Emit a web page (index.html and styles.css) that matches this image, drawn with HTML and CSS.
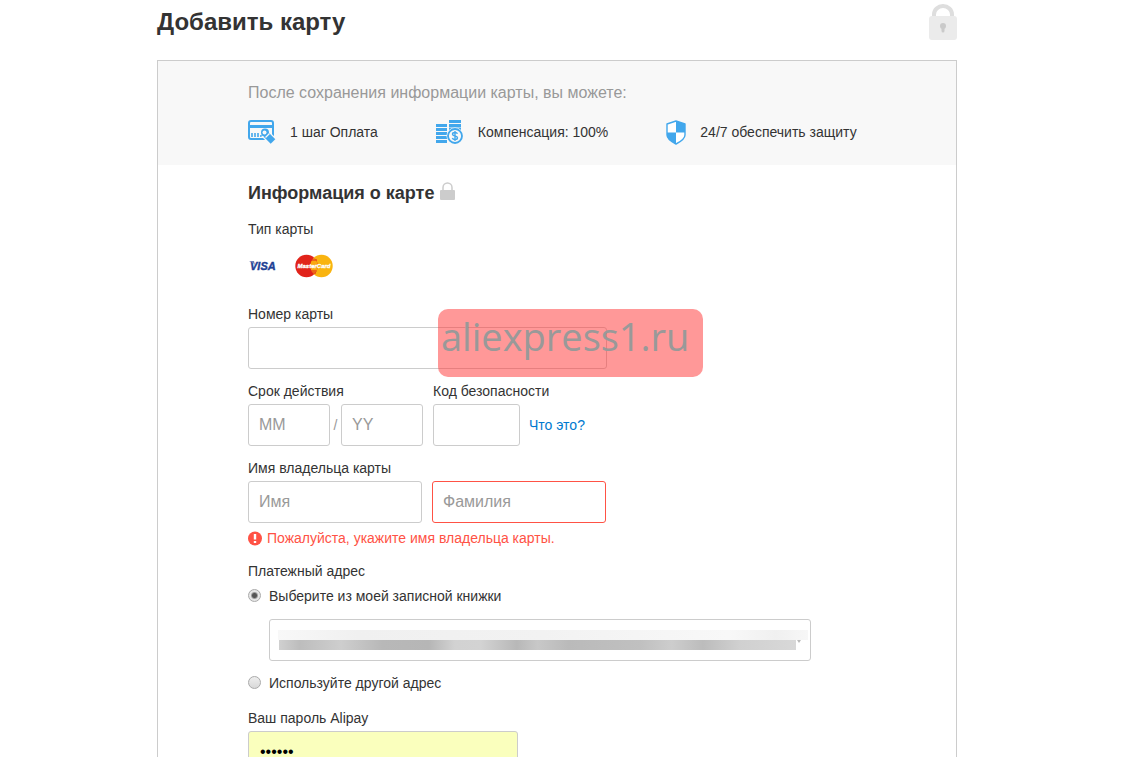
FILE: index.html
```html
<!DOCTYPE html>
<html lang="ru">
<head>
<meta charset="utf-8">
<meta name="viewport" content="width=device-width, initial-scale=1">
<title>Добавить карту</title>
<link rel="stylesheet" href="styles.css">
</head>
<body>
<main class="page">
  <header class="page-header">
    <h1 class="page-title">Добавить карту</h1>
    <svg class="header-lock" width="28" height="36" viewBox="0 0 28 36" aria-hidden="true">
      <path d="M5 14V10.500a9 8.500 0 0 1 18 0v3.500" fill="none" stroke="#dedede" stroke-width="4"/>
      <rect y="12" width="28" height="24" rx="3" fill="#ebebeb"/>
      <circle cx="14" cy="22" r="3" fill="#cacaca"/>
      <path d="M14 23v4" stroke="#cacaca" stroke-width="3" stroke-linecap="round"/>
    </svg>
  </header>

  <form class="panel">
    <section class="benefits">
      <p class="benefits-intro">После сохранения информации карты, вы можете:</p>
      <ul class="benefit-list">
        <li class="benefit">
          <svg width="28" height="24" viewBox="0 0 28 24" aria-hidden="true">
            <rect x="1" y="1" width="24" height="18" rx="2" fill="none" stroke="#42a7ec" stroke-width="2"/>
            <path d="M1 6.500h24" stroke="#42a7ec" stroke-width="3"/>
            <path d="M4 13v4M7 13v4M10 13v4M13 15v2" stroke="#42a7ec" stroke-width="1.600"/>
            <path d="M16.500 13L25 21.500" stroke="#f8f8f8" stroke-width="9"/>
            <circle cx="17" cy="12.500" r="4" fill="#42a7ec"/>
            <path d="M18 14.500L25 21.500" stroke="#42a7ec" stroke-width="6.500"/>
            <circle cx="16.500" cy="12.500" r="2" fill="#f8f8f8"/>
            <path d="M17.500 17.500l4-4" stroke="#f8f8f8" stroke-width="1.200"/>
          </svg>
          <span>1 шаг Оплата</span>
        </li>
        <li class="benefit">
          <svg width="28" height="24" viewBox="0 0 28 24" aria-hidden="true">
            <path d="M0 5.500h11M0 9.500h11M0 13.500h11M0 17.500h11M0 21.500h11M13 1.500h12M13 5.500h12M13 9h12" stroke="#42a7ec" stroke-width="3"/>
            <circle cx="19" cy="16" r="8.500" fill="#f8f8f8"/>
            <circle cx="19" cy="16" r="7" fill="#f8f8f8" stroke="#42a7ec" stroke-width="1.800"/>
            <path d="M21.500 13.800c-.5-1-1.300-1.300-2.500-1.300-1.600 0-2.500.7-2.500 1.700 0 2.500 5 1.100 5 3.600 0 1.200-1 1.800-2.500 1.800s-2.300-.5-2.700-1.600M19 11v10" fill="none" stroke="#42a7ec" stroke-width="1.400"/>
          </svg>
          <span>Компенсация: 100%</span>
        </li>
        <li class="benefit">
          <svg width="20" height="25" viewBox="0 0 20 25" aria-hidden="true">
            <path d="M10 1L19 4V15c0 4-5 7-9 9-4-2-9-5-9-9V4z" fill="#fff" stroke="#42a7ec" stroke-width="1.400" stroke-linejoin="round"/>
            <path d="M10 1L19 4V12.500H10zM1 12.500H10V24C6 22 1 19 1 15z" fill="#42a7ec"/>
          </svg>
          <span>24/7 обеспечить защиту</span>
        </li>
      </ul>
    </section>

    <section class="card-form">
      <h2 class="section-title">Информация о карте
        <svg class="title-lock" width="15" height="18" viewBox="0 0 15 18" aria-hidden="true">
          <path d="M3 9V5.500a4.500 4.500 0 0 1 9 0V9" fill="none" stroke="#ccc" stroke-width="1.500"/>
          <rect y="8" width="15" height="10" rx="1" fill="#ccc"/>
        </svg>
      </h2>
      <p class="card-type">Тип карты</p>
      <div class="brands">
        <svg width="31" height="16" viewBox="0 0 31 16" role="img" aria-label="Visa">
          <text class="visa-text" x="2" y="12">VISA</text>
          <path d="M1 3h5l1 4-2-2z" fill="#6f7fb8"/>
        </svg>
        <svg width="38" height="24" viewBox="0 0 38 24" role="img" aria-label="MasterCard">
          <circle cx="26.500" cy="12" r="11.200" fill="#f9b410"/>
          <circle cx="11.500" cy="12" r="11.200" fill="#e1231a"/>
          <path d="M19 3.700a11.200 11.200 0 0 1 0 16.600 11.200 11.200 0 0 1 0-16.600z" fill="#f9a812"/>
          <path d="M16 6h6M15.500 17h6M16 19h5" stroke="#e1231a" stroke-width="1"/>
          <text class="mastercard-text" x="19" y="14" text-anchor="middle">MasterCard</text>
        </svg>
      </div>

      <div class="field field-number">
        <label for="number">Номер карты</label>
        <input class="input input-number" id="number" type="text">
        <div class="watermark">aliexpress1.ru</div>
      </div>

      <div class="row">
        <div class="field">
          <label for="month">Срок действия</label>
          <div class="expiry">
            <input class="input input-date" id="month" type="text" placeholder="MM">
            <span class="slash">/</span>
            <input class="input input-date" type="text" placeholder="YY" aria-label="Год">
          </div>
        </div>
        <div class="field">
          <label for="code">Код безопасности</label>
          <div class="code">
            <input class="input input-code" id="code" type="text">
            <a class="link" href="#code">Что это?</a>
          </div>
        </div>
      </div>

      <div class="field">
        <label for="first-name">Имя владельца карты</label>
        <div class="names">
          <input class="input input-name" id="first-name" type="text" placeholder="Имя">
          <input class="input input-name input-invalid" type="text" placeholder="Фамилия" aria-label="Фамилия" aria-invalid="true">
        </div>
        <p class="error">
          <svg width="15" height="15" viewBox="0 0 15 15" aria-hidden="true">
            <circle cx="7" cy="7.500" r="7" fill="#ff5245"/>
            <path d="M7 3v5.500M7 10v2" stroke="#fff" stroke-width="2.400"/>
          </svg>
          <span>Пожалуйста, укажите имя владельца карты.</span>
        </p>
      </div>

      <fieldset class="address">
        <legend>Платежный адрес</legend>
        <label class="choice"><input class="radio" type="radio" name="address" checked>Выберите из моей записной книжки</label>
        <div class="address-book">
          <select class="input address-select" aria-label="Адрес из записной книжки"><option></option></select>
          <div class="redacted" aria-hidden="true">
            <div class="redacted-light"></div>
            <div class="redacted-dark"></div>
          </div>
        </div>
        <label class="choice"><input class="radio" type="radio" name="address">Используйте другой адрес</label>
      </fieldset>

      <div class="field">
        <label for="password">Ваш пароль Alipay</label>
        <input class="input input-password" id="password" type="password" value="123456">
      </div>
    </section>
  </form>
</main>
</body>
</html>
```

FILE: styles.css
```css
* {
  box-sizing: border-box;
}

body {
  margin: 0;
  height: 100vh;
  overflow: hidden;
  padding: 0 16px 0 0;
  background: #fff;
  color: #333;
  font: 14px/18px "Liberation Sans", Arial, sans-serif;
}

h1, h2, p, ul {
  margin: 0;
  padding: 0;
}

svg {
  display: block;
  flex: none;
}

.page {
  max-width: 800px;
  margin: 0 auto;
}

.page-header {
  display: flex;
  justify-content: space-between;
  align-items: center;
  height: 44px;
  margin-bottom: 16px;
}

.page-title {
  font-size: 24px;
  line-height: 28px;
}

.panel {
  border: 1px solid #ccc;
}

.benefits {
  padding: 21px 90px 20px;
  background: #f8f8f8;
}

.benefits-intro {
  margin-bottom: 15px;
  color: #999;
  font-size: 16px;
  line-height: 22px;
}

.benefit-list {
  display: flex;
  gap: 58px;
  list-style: none;
}

.benefit {
  display: flex;
  align-items: center;
  gap: 14px;
  height: 26px;
  white-space: nowrap;
}

.card-form {
  padding: 16px 90px;
}

.section-title {
  display: flex;
  align-items: center;
  gap: 6px;
  font-size: 18px;
  line-height: 24px;
}

.title-lock {
  margin-bottom: 4px;
}

.card-type {
  margin-top: 15px;
}

.brands {
  display: flex;
  align-items: center;
  gap: 16px;
  margin: 16px 0 27px;
}

.visa-text {
  fill: #1d3f94;
  font: italic bold 11px "Liberation Sans", Arial, sans-serif;
  stroke: #1d3f94;
  stroke-width: 0.4px;
}

.mastercard-text {
  fill: #fff;
  font: italic bold 6px "Liberation Sans", sans-serif;
  stroke: #fff;
  stroke-width: 0.3px;
}

.field {
  margin-bottom: 13px;
}

.field > label {
  display: block;
  margin-bottom: 4px;
}

.input {
  display: block;
  height: 42px;
  margin: 0;
  padding: 0 10px;
  border: 1px solid #ccc;
  border-radius: 3px;
  background: #fff;
  color: #000;
  font: 16px "Liberation Sans", Arial, sans-serif;
}

.input::placeholder {
  color: #999;
  opacity: 1;
}

.field-number {
  position: relative;
}

.input-number {
  width: 100%;
  max-width: 359px;
}

.watermark {
  position: absolute;
  top: 4px;
  left: 190px;
  height: 68px;
  width: 265px;
  padding-left: 3px;
  border-radius: 10px;
  background: rgba(255, 50, 50, 0.5);
  color: #999;
  font: 38px/54px "Open Sans", sans-serif;
  white-space: nowrap;
}

.row {
  display: flex;
  gap: 10px;
}

.expiry,
.code,
.names {
  display: flex;
  align-items: center;
}

.input-date {
  width: 82px;
}

.slash {
  width: 11px;
  color: #999;
  text-align: center;
}

.input-code {
  width: 87px;
}

.code {
  gap: 9px;
}

.link {
  color: #0079cf;
  text-decoration: none;
}

.names {
  gap: 10px;
}

.input-name {
  width: 174px;
}

.input-invalid {
  border-color: #ff5245;
}

.error {
  display: flex;
  align-items: center;
  gap: 4px;
  margin-top: 6px;
  margin-bottom: 15px;
  color: #ff5245;
}

.address {
  margin: 0 0 17px;
  padding: 0;
  border: 0;
}

.address legend {
  margin-bottom: 7px;
  padding: 0;
}

.choice {
  display: flex;
  align-items: center;
  gap: 8px;
}

.radio {
  appearance: none;
  width: 13px;
  height: 13px;
  margin: 0 0 2px;
  border: 1px solid #aaa;
  border-radius: 50%;
  background: linear-gradient(#eee, #d8d8d8);
}

.radio:checked {
  background: radial-gradient(circle, #555 0 2px, #e6e6e6 4px);
}

.address-book {
  position: relative;
  margin: 14px 0 13px 21px;
  max-width: 542px;
}

.address-select {
  appearance: none;
  width: 100%;
}

.redacted {
  position: absolute;
  top: 11px;
  left: 9px;
  right: 3px;
  pointer-events: none;
}

.redacted-light {
  height: 10px;
  background: linear-gradient(90deg, #f8f8f8, #f0f0f0 15%, #f2f2f2 50%, #f8f8f8 85%, #f0f0f0 94%, #f7f7f7);
}

.redacted-dark {
  height: 10px;
  margin: 0 12px 0 1px;
  background: linear-gradient(90deg, #d0d0d0, #bdbdbd 4%, #cecece 12%, #b8b8b8 20%, #b6b6b6 29%, #d2d2d2 34%, #d3d3d3 39%, #b8b8b8 46%, #c8c8c8 50%, #bababa 56%, #c0c0c0 70%, #cdcdcd 76%, #bcbcbc 82%, #d0d0d0 89%, #d8d8d8);
}

.redacted::after {
  content: "";
  position: absolute;
  top: 10px;
  right: 7px;
  border: 2px solid transparent;
  border-top: 3px solid #bbb;
}

.input-password {
  width: 270px;
  padding: 0 11px;
  background: #faffbd;
}
```
